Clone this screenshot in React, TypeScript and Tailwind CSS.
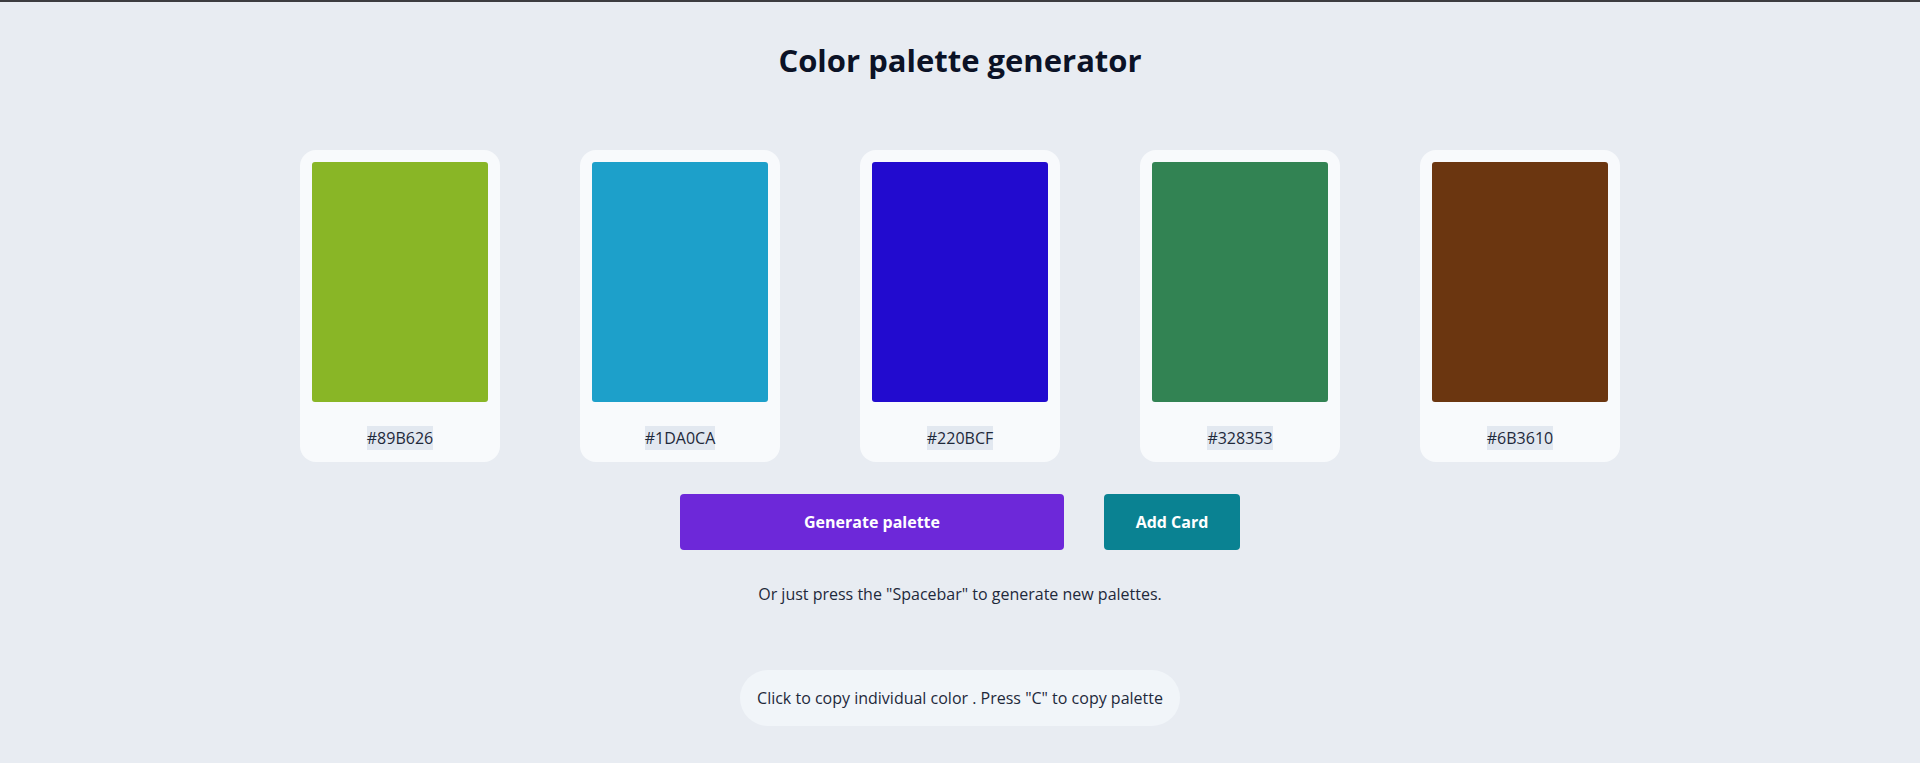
import React from 'react';

const colors = ['#89B626', '#1DA0CA', '#220BCF', '#328353', '#6B3610'];

function ColorCard({ hex }: { hex: string }) {
    return (
        <div className="w-[200px] rounded-2xl bg-[#f8fafc] p-3 flex flex-col items-center cursor-pointer">
            <div className="w-full h-[240px] rounded-[3px]" style={{ backgroundColor: hex }}></div>
            <span className="mt-6 inline-block leading-6 text-base text-[#1e293b] bg-[#e2e8f0]">{hex}</span>
        </div>
    );
}

export default function App() {
    return (
        <div
            className="min-h-[763px] bg-[#e8ecf2] border-t-2 border-[#3c3c40] pt-[38px] flex flex-col items-center text-[#0f172a]"
            style={{ fontFamily: '"Open Sans", "Liberation Sans", sans-serif' }}
        >
            <h1 className="text-[31px] leading-10 font-bold text-[#0b1226]">Color palette generator</h1>

            <div className="mt-[70px] flex gap-20">
                {colors.map((c) => (
                    <ColorCard key={c} hex={c} />
                ))}
            </div>

            <div className="mt-8 flex gap-10">
                <button className="w-[384px] h-14 rounded-[4px] bg-[#6d28d9] text-white font-bold text-base">
                    Generate palette
                </button>
                <button className="w-[136px] h-14 rounded-[4px] bg-[#0a8292] text-white font-bold text-base">
                    Add Card
                </button>
            </div>

            <p className="mt-8 leading-6 text-base text-[#1e293b]">
                Or just press the "Spacebar" to generate new palettes.
            </p>

            <div className="mt-16 h-14 px-[17px] flex items-center rounded-full bg-[#f1f5f9] text-base text-[#1e293b]">
                Click to copy individual color . Press "C" to copy palette
            </div>
        </div>
    );
}
